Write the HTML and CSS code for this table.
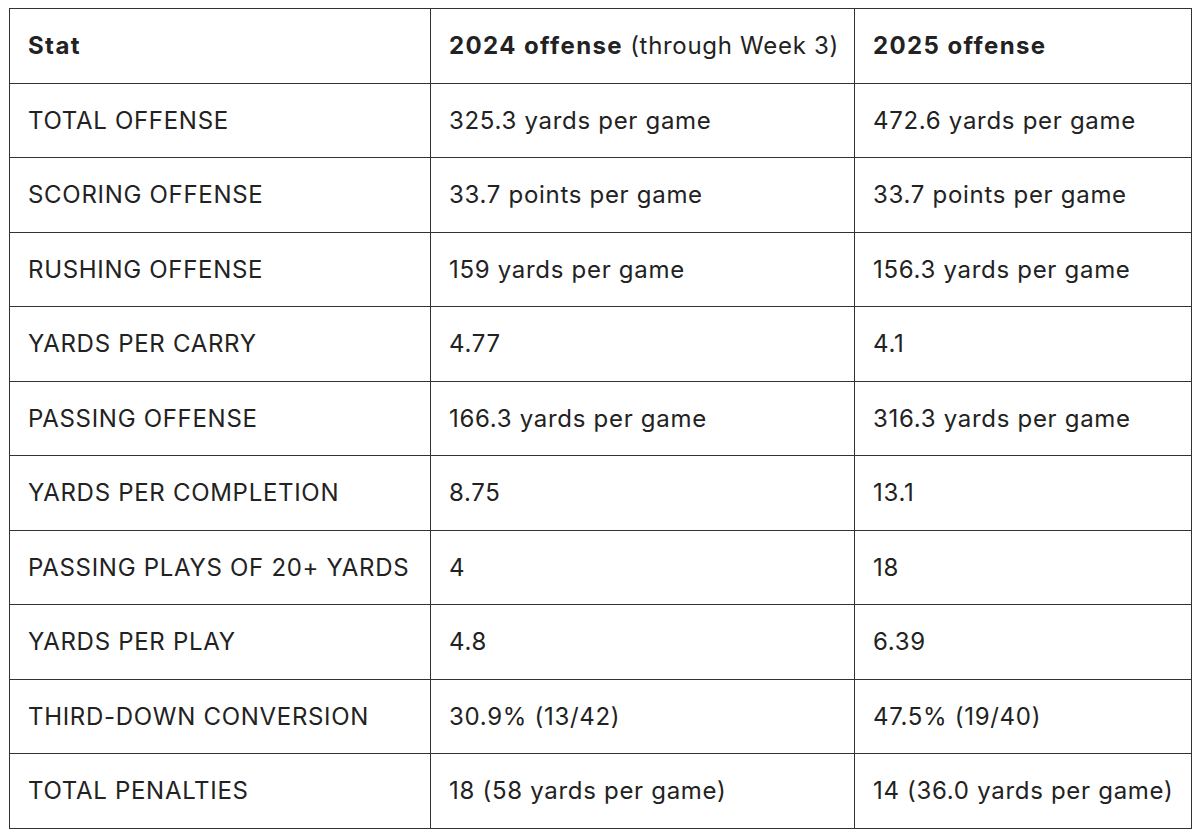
FILE: index.html
```html
<!DOCTYPE html>
<html>
<head>
<meta charset="utf-8">
<link rel="stylesheet" href="styles.css">
</head>
<body>
<table class="stats">
  <colgroup>
    <col class="c1"><col class="c2"><col class="c3">
  </colgroup>
  <thead>
    <tr><th>Stat</th><th>2024 offense <span class="light">(through Week 3)</span></th><th>2025 offense</th></tr>
  </thead>
  <tbody>
    <tr><td>TOTAL OFFENSE</td><td>325.3 yards per game</td><td>472.6 yards per game</td></tr>
    <tr><td>SCORING OFFENSE</td><td>33.7 points per game</td><td>33.7 points per game</td></tr>
    <tr><td>RUSHING OFFENSE</td><td>159 yards per game</td><td>156.3 yards per game</td></tr>
    <tr><td>YARDS PER CARRY</td><td>4.77</td><td>4.1</td></tr>
    <tr><td>PASSING OFFENSE</td><td>166.3 yards per game</td><td>316.3 yards per game</td></tr>
    <tr><td>YARDS PER COMPLETION</td><td>8.75</td><td>13.1</td></tr>
    <tr><td>PASSING PLAYS OF 20+ YARDS</td><td>4</td><td>18</td></tr>
    <tr><td>YARDS PER PLAY</td><td>4.8</td><td>6.39</td></tr>
    <tr><td>THIRD-DOWN CONVERSION</td><td>30.9% (13/42)</td><td>47.5% (19/40)</td></tr>
    <tr><td>TOTAL PENALTIES</td><td>18 (58 yards per game)</td><td>14 (36.0 yards per game)</td></tr>
  </tbody>
</table>
</body>
</html>
```
FILE: styles.css
```css
html, body {
  margin: 0;
  padding: 0;
  background: #ffffff;
}
body {
  padding: 8px 9px;
  font-family: Inter, "Liberation Sans", sans-serif;
  color: #222222;
}
.stats {
  border-collapse: collapse;
  width: 1182px;
  table-layout: fixed;
}
.c1 { width: 421px; }
.c2 { width: 424px; }
.c3 { width: 337px; }
.stats th, .stats td {
  border: 1.5px solid #333333;
  height: 74.5px;
  box-sizing: border-box;
  padding: 0 0 0 18px;
  text-align: left;
  vertical-align: middle;
  font-size: 24px;
  white-space: nowrap;
}
.stats th {
  font-weight: 700;
  letter-spacing: 1.4px;
}
.stats td {
  font-weight: 400;
  letter-spacing: 0.7px;
}
.stats th .light {
  font-weight: 400;
  letter-spacing: 0.7px;
}
```
